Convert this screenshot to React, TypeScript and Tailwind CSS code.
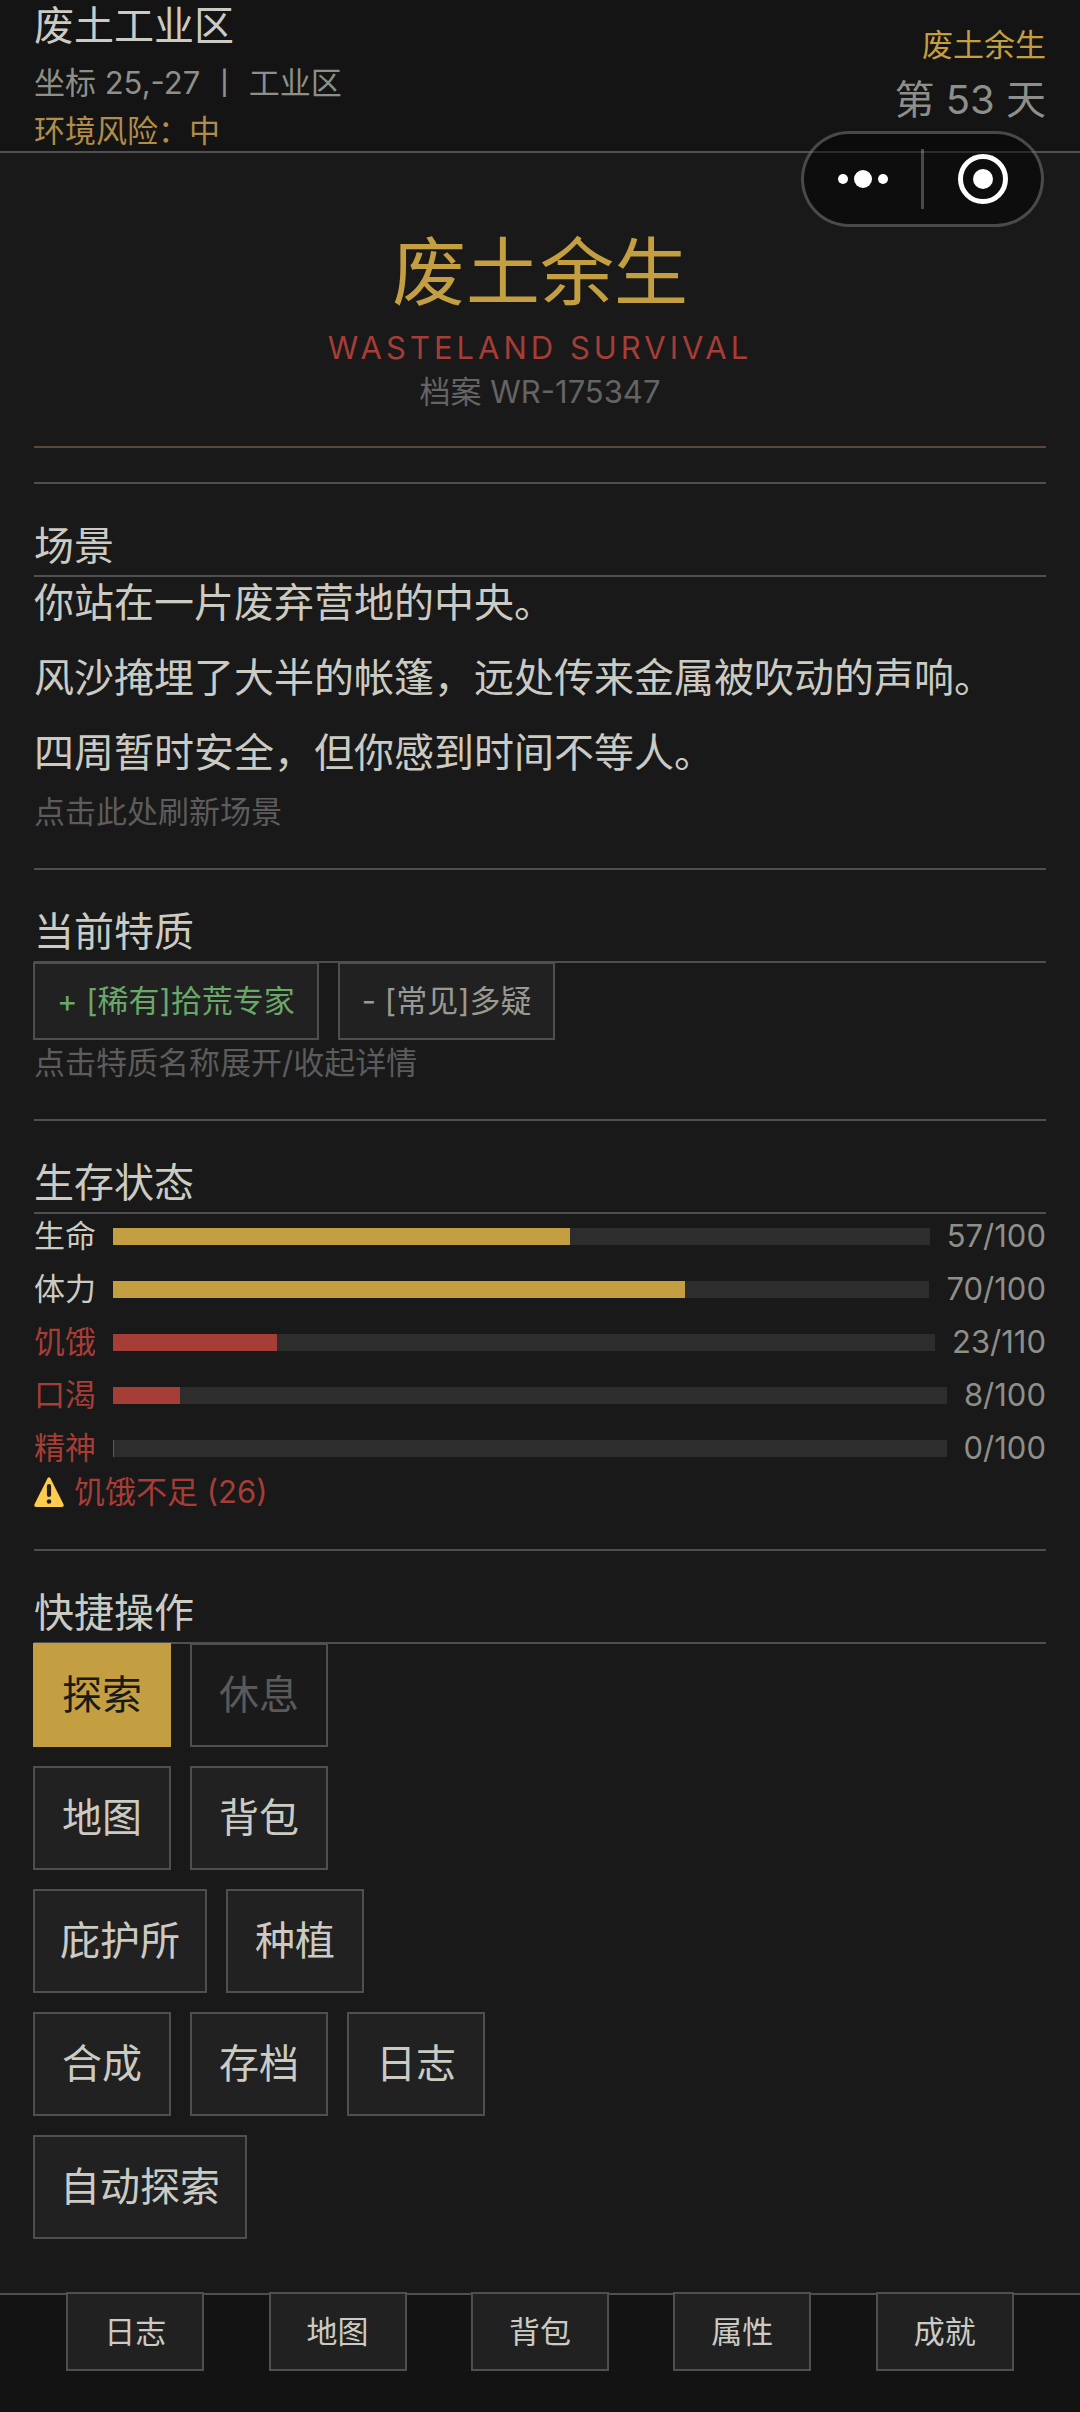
import type { ReactNode } from "react";
import clsx from "clsx";

const scene = [
  "你站在一片废弃营地的中央。",
  "风沙掩埋了大半的帐篷，远处传来金属被吹动的声响。",
  "四周暂时安全，但你感到时间不等人。",
];

const traits = [
  { label: "+ [稀有]拾荒专家", color: "text-[#6aa86a]" },
  { label: "- [常见]多疑", color: "text-[#9a9a94]" },
];

const stats = [
  { name: "生命", value: 57, max: 100, fill: 56, low: false },
  { name: "体力", value: 70, max: 100, fill: 70, low: false },
  { name: "饥饿", value: 23, max: 110, fill: 20, low: true },
  { name: "口渴", value: 8, max: 100, fill: 8, low: true },
  { name: "精神", value: 0, max: 100, fill: 0, low: true },
];

const actions = [
  ["探索", "休息"],
  ["地图", "背包"],
  ["庇护所", "种植"],
  ["合成", "存档", "日志"],
  ["自动探索"],
];

const tabs = ["日志", "地图", "背包", "属性", "成就"];

function Section({ title, children }: { title: string; children: ReactNode }) {
  return (
    <section className="border-t-2 border-[#4f4f4f] pb-9">
      <h2 className="border-b-2 border-[#4f4f4f] pt-[37px] pb-1 text-[40px] leading-[50px]">
        {title}
      </h2>
      {children}
    </section>
  );
}

function ActionButton({ label }: { label: string }) {
  const primary = label === "探索";
  const disabled = label === "休息";
  return (
    <button
      type="button"
      disabled={disabled}
      className={clsx(
        "h-[104px] min-w-[138px] border-2 px-[25px] text-[40px] leading-[50px]",
        primary && "border-[#c49f41] bg-[#c49f41] text-[#1a1a1a]",
        disabled && "border-[#4f4f4f] bg-[#1a1a1a] text-[#5a5a5a]",
        !primary && !disabled && "border-[#4f4f4f] bg-[#212121]"
      )}
    >
      {label}
    </button>
  );
}

function Capsule() {
  return (
    <div className="absolute top-[131px] right-9 flex h-24 w-[243px] items-center rounded-full border-[3px] border-white/25 bg-black/45">
      <button type="button" aria-label="更多" className="flex flex-1 justify-center">
        <svg width="52" height="20" viewBox="0 0 52 20" fill="#fff">
          <circle cx="6" cy="10" r="5" />
          <circle cx="26" cy="10" r="9" />
          <circle cx="46" cy="10" r="5" />
        </svg>
      </button>
      <span className="h-[60px] w-[3px] bg-white/25" />
      <button type="button" aria-label="关闭" className="flex flex-1 justify-center">
        <svg width="50" height="50" viewBox="0 0 50 50">
          <circle cx="25" cy="25" r="22.5" fill="none" stroke="#fff" strokeWidth="5" />
          <circle cx="25" cy="25" r="10" fill="#fff" />
        </svg>
      </button>
    </div>
  );
}

function WarningIcon() {
  return (
    <svg width="30" height="30" viewBox="0 0 30 30" aria-hidden="true">
      <path
        d="M13.6 1.2Q15 -.8 16.4 1.2L29.4 27Q30.4 29.8 28 30H2Q-.4 29.8 .6 27Z"
        fill="#ffcc4d"
      />
      <path d="M15 9v9" stroke="#231f20" strokeWidth="4.2" strokeLinecap="round" />
      <circle cx="15" cy="24.5" r="2.3" fill="#231f20" />
    </svg>
  );
}

export default function App() {
  return (
    <div className="relative flex min-h-screen flex-col bg-[#191919] font-[Inter,'Noto_Sans_CJK_SC',sans-serif] text-[31px] leading-10 text-[#cbcbc4]">
      <header className="flex items-start justify-between border-b-2 border-[#4f4f4f] bg-[#141414] px-[34px]">
        <div>
          <h2 className="text-[40px] leading-[52px]">废土工业区</h2>
          <p className="mt-[11px] whitespace-pre text-[#8f8f8a]">坐标 25,-27 丨 工业区</p>
          <p className="mt-2 text-[#b08d4a]">环境风险：中</p>
        </div>
        <div className="pt-[25px] text-right">
          <p className="text-[#c49f41]">废土余生</p>
          <p className="mt-[9px] text-[40px] leading-[52px] text-[#8f8f8a]">第 53 天</p>
        </div>
      </header>
      <Capsule />

      <main className="px-[34px] pb-4">
        <div className="mb-[34px] border-b-2 border-[#5c4637] pt-[74px] pb-8 text-center">
          <h1 className="text-[74px] leading-[90px] text-[#c49f41]">废土余生</h1>
          <p className="mt-[9px] leading-[44px] tracking-[4px] text-[#a63d36]">
            WASTELAND SURVIVAL
          </p>
          <p className="leading-[44px] text-[#646464]">档案 WR-175347</p>
        </div>

        <Section title="场景">
          <div className="flex flex-col gap-[23px] text-[40px] leading-[52px]">
            {scene.map((line) => (
              <p key={line}>{line}</p>
            ))}
          </div>
          <button type="button" className="mt-[13px] block text-[#5c5c5c]">
            点击此处刷新场景
          </button>
        </Section>

        <Section title="当前特质">
          <div className="-mt-px -ml-px flex flex-wrap gap-[19px]">
            {traits.map(({ label, color }) => (
              <button
                key={label}
                type="button"
                className={clsx("h-[78px] border-2 border-[#4f4f4f] bg-[#212121] px-[22px]", color)}
              >
                {label}
              </button>
            ))}
          </div>
          <p className="mt-[3px] text-[#5c5c5c]">点击特质名称展开/收起详情</p>
        </Section>

        <Section title="生存状态">
          <div className="flex flex-col gap-[9px]">
            {stats.map(({ name, value, max, fill, low }) => (
              <div key={name} className="flex items-center gap-[17px] leading-[44px]">
                <span className={clsx(low && "text-[#a63d36]")}>{name}</span>
                <div className="h-[17px] flex-1 bg-[#2d2d2d]">
                  <div
                    className={clsx("h-full min-w-px", low ? "bg-[#a63d36]" : "bg-[#c49f41]")}
                    style={{ width: `${fill}%` }}
                  />
                </div>
                <span className="text-[#8f8f8a]">
                  {value}/{max}
                </span>
              </div>
            ))}
          </div>
          <p className="flex items-center gap-2.5 leading-[43px] text-[#a63d36]">
            <WarningIcon />
            饥饿不足 (26)
          </p>
        </Section>

        <Section title="快捷操作">
          <div className="-mt-px -ml-px flex flex-col gap-[19px]">
            {actions.map((row) => (
              <div key={row[0]} className="flex gap-[19px]">
                {row.map((label) => (
                  <ActionButton key={label} label={label} />
                ))}
              </div>
            ))}
          </div>
        </Section>
      </main>

      <nav className="mt-auto flex justify-around border-t-2 border-[#4f4f4f] bg-[#131313] px-[34px] pb-[41px]">
        {tabs.map((tab) => (
          <button
            key={tab}
            type="button"
            className="-mt-[3px] h-[79px] w-[138px] border-2 border-[#4f4f4f] bg-[#212121]"
          >
            {tab}
          </button>
        ))}
      </nav>
    </div>
  );
}
